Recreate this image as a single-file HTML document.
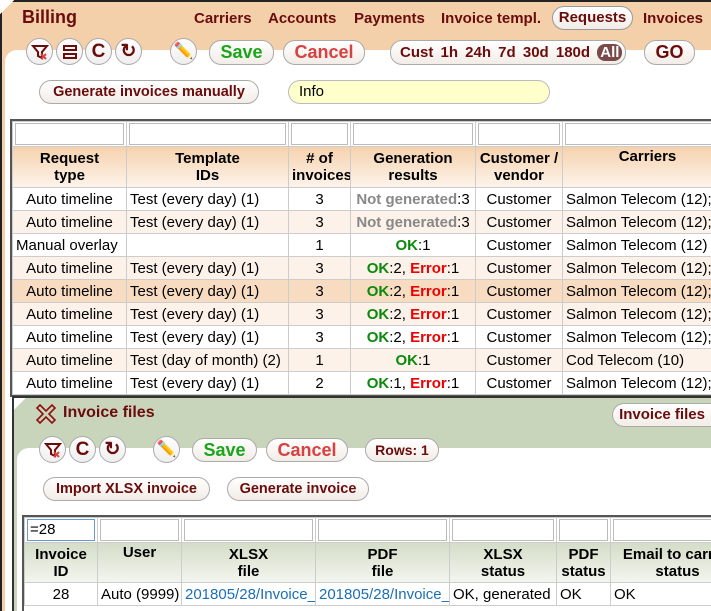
<!DOCTYPE html>
<html><head><meta charset="utf-8"><style>
*{box-sizing:border-box;margin:0;padding:0}
body{width:711px;height:611px;overflow:hidden;background:#fff;font-family:"Liberation Sans",Arial,sans-serif;position:relative}
.abs{position:absolute}
.outer{left:0;top:0;width:711px;height:611px;background:#f3cfaa;border:2px solid #222;border-right:none;border-bottom:none}
.white{left:5px;top:50px;width:706px;height:561px;background:#fff;border-top-left-radius:12px}
.title{font-weight:bold;color:#6b0c0c;font-size:18px}
.nav{font-weight:bold;color:#6b0c0c;font-size:15px}
.btn{position:absolute;border:1px solid #aaa;border-radius:12px;background:linear-gradient(#fff,#f2ece6);font-weight:bold;color:#6b0c0c;text-align:center;font-size:15px}
.ic{position:absolute;width:27px;height:27px;border-radius:50%;border:1px solid #aaa;background:linear-gradient(#fff,#eee);color:#6b0c0c;font-weight:bold;font-size:19px;text-align:center;line-height:25px}
table{border-collapse:collapse;table-layout:fixed;position:absolute;font-size:15px}
td{border:1px solid #ccc;height:23px;white-space:nowrap;overflow:hidden;padding:0 3px}
.c{text-align:center}
.f td{height:24px;padding:1px 2px}
.f div{border:1px solid #bbb;height:22px;background:#fff}
.h td{font-weight:bold;text-align:center;line-height:17px;vertical-align:middle}
.ok{color:#0a8a0a;font-weight:bold}.er{color:#e00;font-weight:bold}.ng{color:#888;font-weight:bold}
.a{background:#fdf2e9}.hl{background:#f8dcc2}
</style></head><body>
<div class="abs outer"></div>
<div class="abs" style="left:0;top:0;width:14px;height:14px;background:linear-gradient(135deg,#fff 50%,transparent 50%)"></div>
<div class="abs title" style="left:22px;top:7px">Billing</div>
<div class="abs nav" style="left:194px;top:10px">Carriers</div>
<div class="abs nav" style="left:268px;top:10px">Accounts</div>
<div class="abs nav" style="left:354px;top:10px">Payments</div>
<div class="abs nav" style="left:441px;top:10px">Invoice templ.</div>
<div class="btn" style="left:552px;top:6px;width:81px;height:24px;line-height:22px;border-color:#999">Requests</div>
<div class="abs nav" style="left:643px;top:10px">Invoices</div>
<div class="abs white"></div>
<div class="ic" style="left:26px;top:38px"><svg width="18" height="18" viewBox="0 0 18 18" style="margin-top:4px"><path d="M2 3h14l-5 6v6l-4-2V9z" fill="none" stroke="#6b0c0c" stroke-width="2"/><path d="M10 11l5 5M15 11l-5 5" stroke="#e04040" stroke-width="2"/></svg></div>
<div class="ic" style="left:56px;top:38px"><svg width="14" height="14" viewBox="0 0 14 14" style="margin-top:6px"><rect x="1" y="1" width="12" height="4" fill="none" stroke="#6b0c0c" stroke-width="2"/><rect x="1" y="9" width="12" height="4" fill="none" stroke="#6b0c0c" stroke-width="2"/></svg></div>
<div class="ic" style="left:85px;top:38px">C</div>
<div class="ic" style="left:115px;top:38px">↻</div>
<div class="ic" style="left:170px;top:38px;font-size:16px">✏️</div>
<div class="btn" style="left:209px;top:40px;width:65px;height:25px;line-height:23px;color:#1aa51a;font-size:18px">Save</div>
<div class="btn" style="left:283px;top:40px;width:82px;height:25px;line-height:23px;color:#d94040;font-size:18px">Cancel</div>
<div class="btn" style="left:390px;top:40px;width:236px;height:25px;line-height:23px;text-align:left;padding-left:9px;word-spacing:3px">Cust 1h 24h 7d 30d 180d <span style="background:#7a4a4a;color:#fff;border-radius:8px;padding:0 3px">All</span></div>
<div class="btn" style="left:644px;top:40px;width:51px;height:25px;line-height:23px;font-size:18px">GO</div>
<div class="btn" style="left:39px;top:80px;width:220px;height:24px;line-height:22px;font-size:14.5px">Generate invoices manually</div>
<div class="abs" style="left:288px;top:80px;width:262px;height:24px;border:1px solid #bbb;border-radius:12px;background:#ffffcc;font-size:15px;line-height:22px;padding-left:10px">Info</div>
<div class="abs" style="left:10px;top:119px;width:701px;height:278px;border:2px solid #555;border-right:none"></div>
<table style="left:12px;top:121px;width:720px">
<colgroup><col style="width:114px"><col style="width:162px"><col style="width:62px"><col style="width:125px"><col style="width:87px"><col style="width:170px"></colgroup>
<tr class="f"><td><div></div></td><td><div></div></td><td><div></div></td><td><div></div></td><td><div></div></td><td><div></div></td></tr>
<tr class="h" style="background:linear-gradient(#f6d2ae,#fdf4ec)"><td style="height:41px">Request<br>type</td><td>Template<br>IDs</td><td>#&nbsp;of<br>invoices</td><td>Generation<br>results</td><td>Customer /<br>vendor</td><td style="vertical-align:top;padding-top:1px">Carriers</td></tr>
<tr><td class="c">Auto timeline</td><td>Test (every day) (1)</td><td class="c">3</td><td class="c"><span class="ng">Not generated</span>:3</td><td class="c">Customer</td><td>Salmon Telecom (12);</td></tr>
<tr class="a"><td class="c">Auto timeline</td><td>Test (every day) (1)</td><td class="c">3</td><td class="c"><span class="ng">Not generated</span>:3</td><td class="c">Customer</td><td>Salmon Telecom (12);</td></tr>
<tr><td>Manual overlay</td><td></td><td class="c">1</td><td class="c"><span class="ok">OK</span>:1</td><td class="c">Customer</td><td>Salmon Telecom (12)</td></tr>
<tr class="a"><td class="c">Auto timeline</td><td>Test (every day) (1)</td><td class="c">3</td><td class="c"><span class="ok">OK</span>:2, <span class="er">Error</span>:1</td><td class="c">Customer</td><td>Salmon Telecom (12);</td></tr>
<tr class="hl"><td class="c">Auto timeline</td><td>Test (every day) (1)</td><td class="c">3</td><td class="c"><span class="ok">OK</span>:2, <span class="er">Error</span>:1</td><td class="c">Customer</td><td>Salmon Telecom (12);</td></tr>
<tr class="a"><td class="c">Auto timeline</td><td>Test (every day) (1)</td><td class="c">3</td><td class="c"><span class="ok">OK</span>:2, <span class="er">Error</span>:1</td><td class="c">Customer</td><td>Salmon Telecom (12);</td></tr>
<tr><td class="c">Auto timeline</td><td>Test (every day) (1)</td><td class="c">3</td><td class="c"><span class="ok">OK</span>:2, <span class="er">Error</span>:1</td><td class="c">Customer</td><td>Salmon Telecom (12);</td></tr>
<tr class="a"><td class="c">Auto timeline</td><td>Test (day of month) (2)</td><td class="c">1</td><td class="c"><span class="ok">OK</span>:1</td><td class="c">Customer</td><td>Cod Telecom (10)</td></tr>
<tr><td class="c">Auto timeline</td><td>Test (every day) (1)</td><td class="c">2</td><td class="c"><span class="ok">OK</span>:1, <span class="er">Error</span>:1</td><td class="c">Customer</td><td>Salmon Telecom (12);</td></tr>
</table>
<div class="abs" style="left:12px;top:396px;width:699px;height:215px;background:#c9d5bb;border:2px solid #333;border-right:none;border-bottom:none"></div>
<div class="abs" style="left:14px;top:398px;width:12px;height:12px;background:linear-gradient(135deg,#fff 50%,transparent 50%)"></div>
<div class="abs" style="left:17px;top:448px;width:694px;height:163px;background:#fff;border-top-left-radius:12px"></div>
<svg class="abs" style="left:35px;top:403px" width="22" height="22" viewBox="0 0 22 22"><path d="M5 2l6 6 6-6 3 3-6 6 6 6-3 3-6-6-6 6-3-3 6-6-6-6z" fill="none" stroke="#8b1010" stroke-width="1.6"/></svg>
<div class="abs title" style="left:63px;top:404px;font-size:16px">Invoice files</div>
<div class="btn" style="left:612px;top:403px;width:99px;height:24px;line-height:22px;border-right:none;border-radius:12px 0 0 12px">Invoice files</div>
<div class="ic" style="left:39px;top:436px"><svg width="18" height="18" viewBox="0 0 18 18" style="margin-top:4px"><path d="M2 3h14l-5 6v6l-4-2V9z" fill="none" stroke="#6b0c0c" stroke-width="2"/><path d="M10 11l5 5M15 11l-5 5" stroke="#e04040" stroke-width="2"/></svg></div>
<div class="ic" style="left:69px;top:436px">C</div>
<div class="ic" style="left:99px;top:436px">↻</div>
<div class="ic" style="left:153px;top:436px;font-size:16px">✏️</div>
<div class="btn" style="left:192px;top:438px;width:65px;height:24px;line-height:22px;color:#1aa51a;font-size:18px">Save</div>
<div class="btn" style="left:266px;top:438px;width:82px;height:24px;line-height:22px;color:#d94040;font-size:18px">Cancel</div>
<div class="btn" style="left:365px;top:438px;width:74px;height:24px;line-height:22px;font-size:14px">Rows: 1</div>
<div class="btn" style="left:43px;top:477px;width:167px;height:24px;line-height:22px;font-size:14.5px">Import XLSX invoice</div>
<div class="btn" style="left:227px;top:477px;width:142px;height:24px;line-height:22px;font-size:14.5px">Generate invoice</div>
<div class="abs" style="left:22px;top:515px;width:689px;height:96px;border:2px solid #555;border-right:none;border-bottom:none"></div>
<table style="left:24px;top:517px;width:720px">
<colgroup><col style="width:73px"><col style="width:84px"><col style="width:134px"><col style="width:134px"><col style="width:107px"><col style="width:54px"><col style="width:134px"></colgroup>
<tr class="f"><td><div style="border-color:#6a9ad0;font-size:15px;padding-left:2px;line-height:20px">=28</div></td><td><div></div></td><td><div></div></td><td><div></div></td><td><div></div></td><td><div></div></td><td><div></div></td></tr>
<tr class="h" style="background:linear-gradient(#d4ddc8,#f3f6ef)"><td style="height:40px">Invoice<br>ID</td><td style="vertical-align:top;padding-top:1px">User</td><td>XLSX<br>file</td><td>PDF<br>file</td><td>XLSX<br>status</td><td>PDF<br>status</td><td>Email to carrier<br>status</td></tr>
<tr><td class="c">28</td><td>Auto (9999)</td><td style="color:#1a6fb5">201805/28/Invoice_</td><td style="color:#1a6fb5">201805/28/Invoice_</td><td>OK, generated</td><td>OK</td><td>OK</td></tr>
</table>
</body></html>
